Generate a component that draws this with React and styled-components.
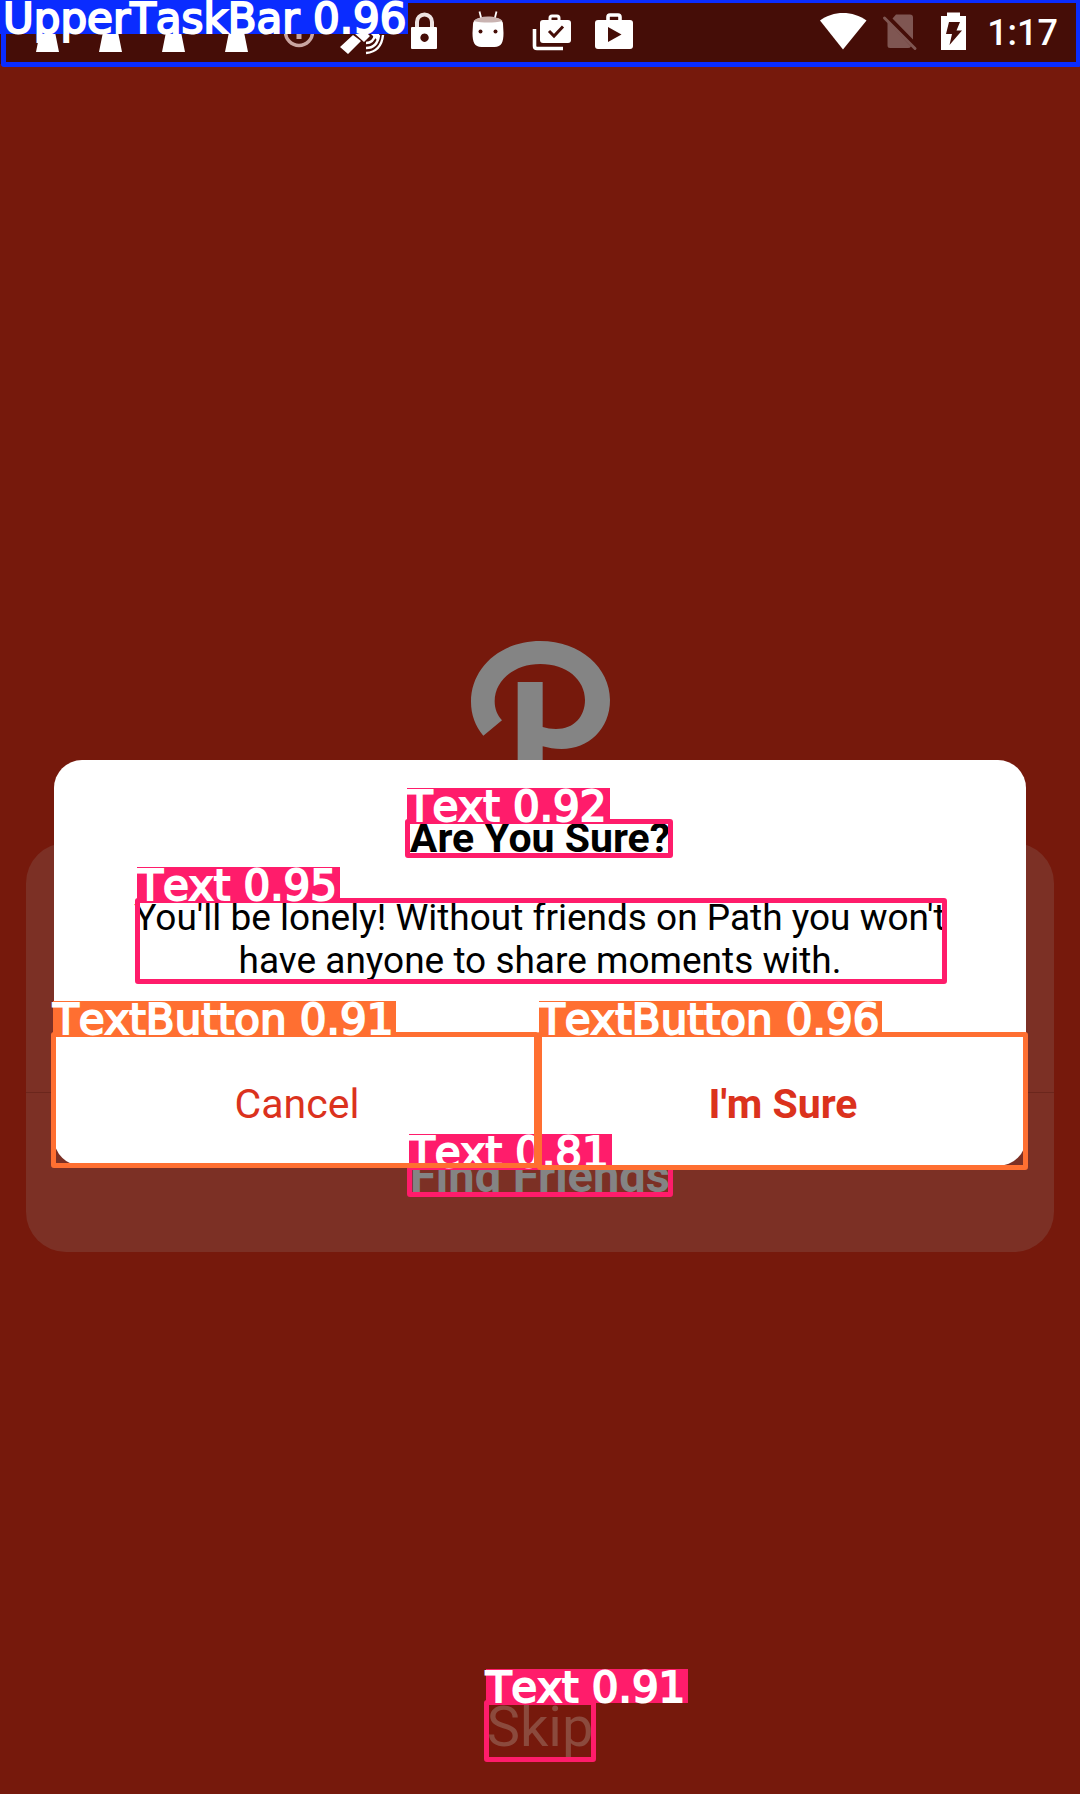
import React from "react";
import styled, { createGlobalStyle } from "styled-components";

const palette = {
  backdrop: "#76190c",
  status: "#450d07",
  panel: "#7c3025",
  panelLine: "#6b261c",
  dimText: "#848484",
  skip: "#8b4a3d",
  accent: "#db321d",
  blue: "#0a2cff",
  pink: "#ff1c6b",
  orange: "#ff6f31",
};

const GlobalStyle = createGlobalStyle`
  *, *::before, *::after { box-sizing: border-box; }
  body { margin: 0; background: ${palette.backdrop}; }
  button { appearance: none; border: 0; margin: 0; padding: 0; background: none; font: inherit; color: inherit; cursor: pointer; }
  h1, p { margin: 0; }
`;

const Page = styled.div`
  position: relative;
  display: flex;
  flex-direction: column;
  min-height: 100vh;
  overflow: hidden;
  background: ${palette.backdrop};
  font-family: Roboto, "Liberation Sans", sans-serif;
`;

const StatusBar = styled.header`
  position: relative;
  display: flex;
  align-items: center;
  justify-content: space-between;
  height: 64px;
  padding: 0 22px 0 16px;
  background: ${palette.status};
  color: #fff;
`;

const Notifications = styled.div`
  display: flex;
`;

const SystemIcons = styled.div`
  display: flex;
  align-items: center;
  gap: 14px;
`;

const Glyph = styled.svg`
  display: block;
  flex: none;
  height: 64px;
  width: ${(p) => p.$width}px;
  fill: #fff;
`;

const Clock = styled.time`
  padding: 2px 0 0 6px;
  font-size: 36px;
  font-weight: 500;
  line-height: 43px;
`;

const Main = styled.main`
  flex: 1;
  display: flex;
  flex-direction: column;
  align-items: center;
  justify-content: center;
  gap: 42px;
  padding: 135px 26px 0;
`;

const Logo = styled.svg`
  display: block;
  width: 139px;
  height: 160px;
  fill: ${palette.dimText};
`;

const Panel = styled.section`
  align-self: stretch;
  border-radius: 40px;
  background: ${palette.panel};
`;

const PanelMessage = styled.div`
  height: 250px;
  border-bottom: 1px solid ${palette.panelLine};
`;

const PanelAction = styled.button`
  display: flex;
  align-items: center;
  justify-content: center;
  width: 100%;
  height: 159px;
  padding-top: 6px;
  color: ${palette.dimText};
  font-size: 47px;
  font-weight: 700;
  line-height: 55px;
`;

const Footer = styled.footer`
  display: flex;
  justify-content: center;
  padding-bottom: 34px;
`;

const SkipButton = styled.button`
  color: ${palette.skip};
  font-size: 56px;
  line-height: 66px;
`;

const Overlay = styled.div`
  position: absolute;
  inset: 0;
  display: flex;
  align-items: center;
  padding: 132px 54px 0;
`;

const Dialog = styled.div`
  flex: 1;
  display: flex;
  flex-direction: column;
  align-items: center;
  padding-top: 54px;
  border-radius: 28px;
  background: #fff;
  color: #000;
  text-align: center;
`;

const Title = styled.h1`
  margin-bottom: 33px;
  font-size: 41px;
  font-weight: 700;
  line-height: 49px;
`;

const Message = styled.p`
  margin-bottom: 54px;
  font-size: 37px;
  line-height: 43px;
`;

const Actions = styled.div`
  align-self: stretch;
  display: grid;
  grid-template-columns: 1fr 1fr;
`;

const Action = styled.button`
  position: relative;
  height: 130px;
  padding-top: 6px;
  color: ${palette.accent};
  font-size: 41px;
  font-weight: ${(p) => (p.$strong ? 700 : 400)};
  line-height: 49px;
`;

const Anchor = styled.span`
  position: relative;
  display: block;
`;

const Frame = styled.span`
  position: absolute;
  z-index: ${(p) => p.$layer};
  inset: ${(p) => p.$inset};
  border: 5px solid ${(p) => p.$color};
  border-radius: 3px;
  pointer-events: none;
`;

const Tag = styled.span`
  position: absolute;
  left: ${(p) => (p.$inside ? -6 : -3)}px;
  top: ${(p) => (p.$inside ? -3 : -36)}px;
  height: 34px;
  padding: ${(p) => (p.$inside ? "0 2px 0 3px" : "0 3px 0 0")};
  background: ${(p) => p.$color};
  color: #fff;
  -webkit-text-stroke: 2px #fff;
  font-family: "DejaVu Sans", sans-serif;
  font-size: 42px;
  font-weight: 400;
  font-kerning: none;
  line-height: 38px;
  white-space: pre;
`;

function Detection({ color, inset, label, layer = 2, inside = false }) {
  return (
    <Frame $color={color} $inset={inset} $layer={layer}>
      <Tag $color={color} $inside={inside}>{label}</Tag>
    </Frame>
  );
}

function Flask() {
  return (
    <Glyph $width={63} viewBox="0 0 63 64" aria-hidden="true">
      <path d="M25 14h12v8l6 30H20l6-30z" />
    </Glyph>
  );
}

function StatusIcons() {
  return (
    <Notifications>
      <Flask />
      <Flask />
      <Flask />
      <Flask />
      <Glyph $width={63} viewBox="0 0 63 64" aria-hidden="true">
        <g fill="none" stroke="#c9a5a1" strokeWidth="3.5">
          <circle cx="31" cy="32" r="13.5" />
          <path d="M31 24v15" strokeWidth="5" />
        </g>
      </Glyph>
      <Glyph $width={63} viewBox="0 0 63 64" aria-hidden="true">
        <path d="M9 47L22 35l8 6-13 13zM23 33l7-6 9 9-6 6z" />
        <path d="M34 28l12 12 4-10-9-8z" />
        <g fill="none" stroke="#fff" strokeWidth="2.4">
          <path d="M35 43c5 0 8-3 9-8" />
          <path d="M35 48c8 0 12-5 13-13" />
          <path d="M35 53c11-1 16-8 17-18" />
        </g>
      </Glyph>
      <Glyph $width={63} viewBox="0 0 63 64" aria-hidden="true">
        <path d="M23 28v-6a7.5 7.5 0 0 1 15 0v6" fill="none" stroke="#eee3e2" strokeWidth="4" />
        <path fillRule="evenodd" d="M19 27h23q1 0 1 1v20q0 1-1 1H18q-1 0-1-1V28q0-1 1-1zm11.500 6.500a4.200 4.200 0 1 0 .1 0z" />
      </Glyph>
      <Glyph $width={63} viewBox="0 0 63 64" aria-hidden="true">
        <path d="M22.500 11.500l2 8M39.500 11.500l-2 8" stroke="#fff" strokeWidth="1.800" />
        <path d="M16 24c0-4 5-7 15-7s15 3 15 7l.5 9c0 9-2 14-9 14h-13c-7 0-9-5-9-14z" />
        <path d="M16.500 21c3-3 8-4.500 14.500-4.500S43 18 45.500 21c-9 2-20 2-29 0z" fill="#c9b3b1" />
        <circle cx="23.500" cy="31.500" r="2" fill={palette.status} />
        <circle cx="38.500" cy="31.500" r="2" fill={palette.status} />
      </Glyph>
      <Glyph $width={63} viewBox="0 0 63 64" aria-hidden="true">
        <path d="M14.500 29v17q0 2.500 2.500 2.500h26" fill="none" stroke="#fff" strokeWidth="3.600" />
        <path d="M30 21v-3q0-2 2-2h5q2 0 2 2v3" fill="none" stroke="#fff" strokeWidth="3" />
        <path d="M23 20h25q3 0 3 3v17q0 3-3 3H23q-3 0-3-3V23q0-3 3-3z" />
        <path d="M29 31l5 5 9-9.500" fill="none" stroke={palette.status} strokeWidth="3" />
      </Glyph>
      <Glyph $width={63} viewBox="0 0 63 64" aria-hidden="true">
        <path d="M25 21v-4q0-2 2-2h8q2 0 2 2v4" fill="none" stroke="#fff" strokeWidth="3.600" />
        <path d="M15 20h32q3 0 3 3v23q0 3-3 3H15q-3 0-3-3V23q0-3 3-3z" />
        <path d="M25 27l13.500 7.500L25 42z" fill={palette.status} />
      </Glyph>
    </Notifications>
  );
}

function SystemStatus() {
  return (
    <SystemIcons>
      <Glyph $width={48} viewBox="0 0 48 64" aria-hidden="true">
        <path d="M1 20.500C14 10.500 34 10.500 47.500 20.500L24 49.500z" />
      </Glyph>
      <Glyph $width={46} viewBox="0 0 46 64" aria-hidden="true">
        <path
          d="M15 14.500h14q3 0 3 3v22L11.500 18.500zM6.500 22L30 46.500q-1 1.500-3 1.500H9q-2.500 0-2.500-2.500z"
          fill="#7f5652"
        />
        <path d="M3.500 18L34 48.500" stroke="#7f5652" strokeWidth="3" strokeLinecap="round" />
      </Glyph>
      <Glyph $width={26} viewBox="0 0 26 64" aria-hidden="true">
        <path d="M6 12.500h13V16h6v34H0V16h6z" />
        <path d="M8 22h11l-3.500 8.500H21L8.500 45l2.500-11H5z" fill={palette.status} />
      </Glyph>
      <Clock>1:17</Clock>
    </SystemIcons>
  );
}

export default function App() {
  return (
    <Page>
      <GlobalStyle />
      <StatusBar>
        <StatusIcons />
        <SystemStatus />
        <Detection color={palette.blue} inset="-2px -1px -3px 1px" label="UpperTaskBar 0.96" inside />
      </StatusBar>

      <Main>
        <Logo viewBox="90 63 417 480" role="img" aria-label="Path">
          <path d="M127 347C103 318 90 284 90 245C90 144 178 63 298 63C419 63 507 144 507 240C507 327 442 387 362 387C341 387 322 384 305 379V543H230V186H305V321C317 325 330 327 345 327C399 327 432 290 432 240C432 179 377 132 298 132C220 132 161 181 161 244C161 267 169 286 183 301Z" />
        </Logo>
        <Panel>
          <PanelMessage />
          <PanelAction type="button">
            <Anchor>
              Find Friends
              <Detection color={palette.pink} inset="17px -3px 6px -3px" label="Text 0.81" layer={1} />
            </Anchor>
          </PanelAction>
        </Panel>
      </Main>

      <Footer>
        <SkipButton type="button">
          <Anchor>
            Skip
            <Detection color={palette.pink} inset="6px -3px -2px -3px" label="Text 0.91" />
          </Anchor>
        </SkipButton>
      </Footer>

      <Overlay>
        <Dialog role="dialog" aria-labelledby="dialog-title" aria-describedby="dialog-message">
          <Title id="dialog-title">
            <Anchor>
              Are You Sure?
              <Detection color={palette.pink} inset="5px -3px 5px -5px" label="Text 0.92" />
            </Anchor>
          </Title>
          <Message id="dialog-message">
            <Anchor>
              You'll be lonely! Without friends on Path you won't
              <br />
              have anyone to share moments with.
              <Detection color={palette.pink} inset="2px -1px -2px 1px" label="Text 0.95" />
            </Anchor>
          </Message>
          <Actions>
            <Action type="button">
              Cancel
              <Detection color={palette.orange} inset="-4px 1px -2px -3px" label="TextButton 0.91" />
            </Action>
            <Action type="button" $strong>
              I'm Sure
              <Detection color={palette.orange} inset="-4px -2px -4px -3px" label="TextButton 0.96" />
            </Action>
          </Actions>
        </Dialog>
      </Overlay>
    </Page>
  );
}
